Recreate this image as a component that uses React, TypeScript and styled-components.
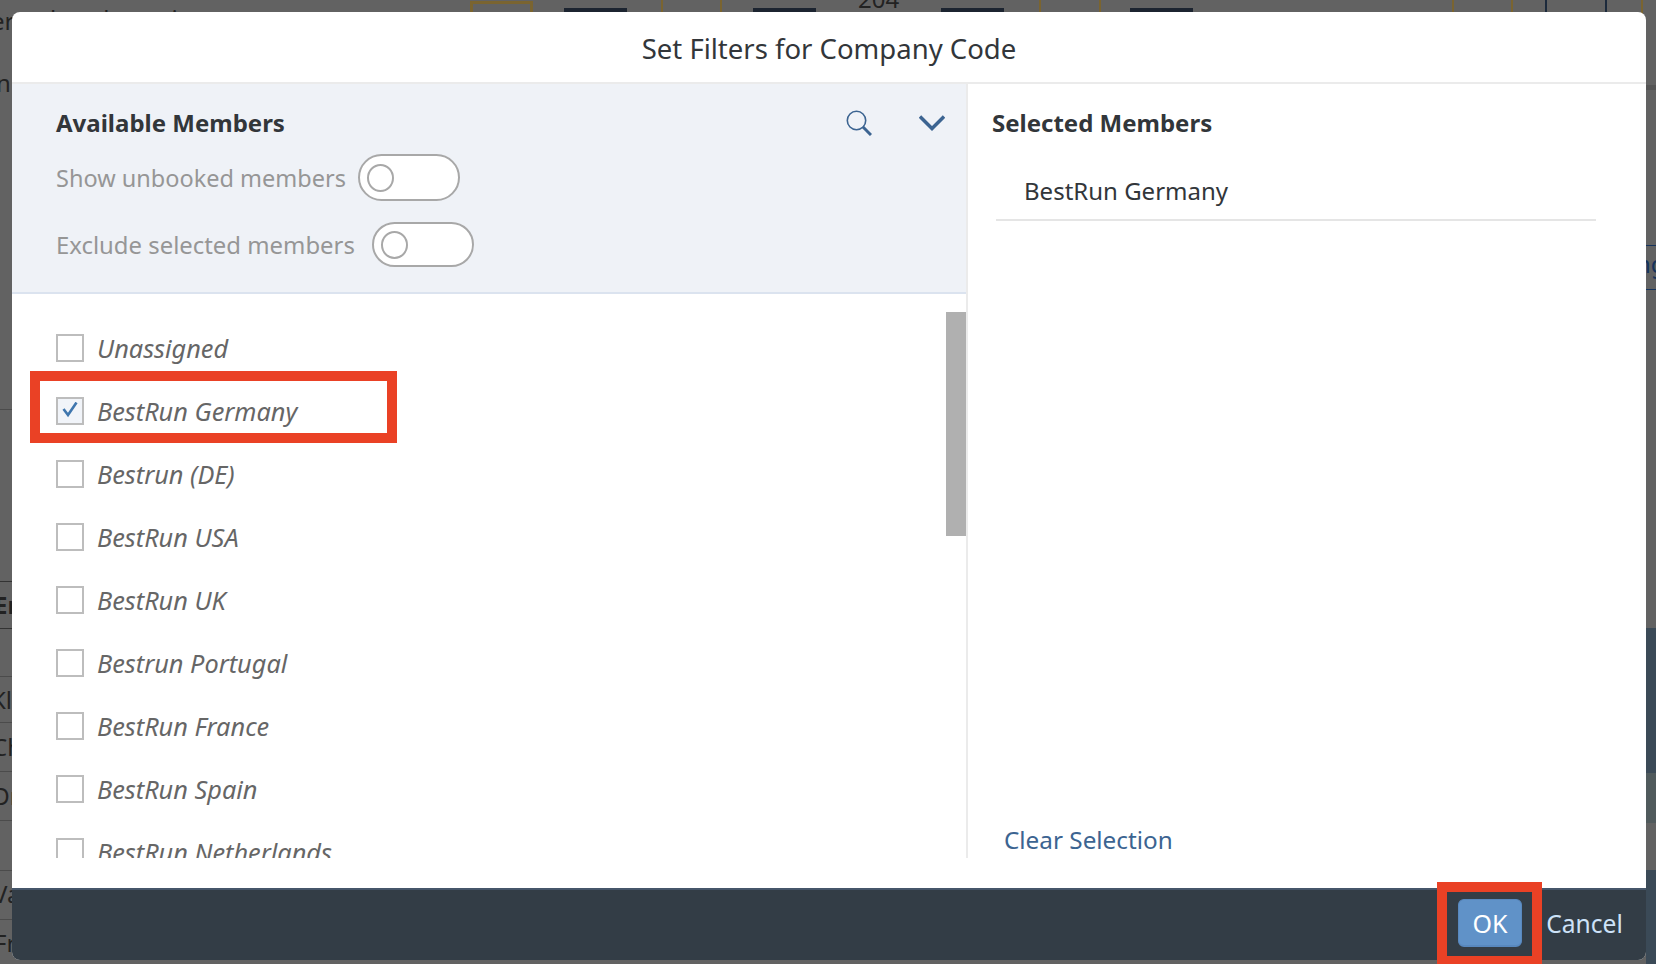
import React from "react";
import styled, { createGlobalStyle } from "styled-components";

const Global = createGlobalStyle`
  html, body { margin: 0; padding: 0; overflow: hidden; }
  * { box-sizing: border-box; }
  body { font-family: "Noto Sans", "Open Sans", sans-serif; }
`;

const Stage = styled.div`
  position: relative;
  width: 1656px;
  height: 964px;
  overflow: hidden;
  background: #626262;
`;

// what is left visible of the page behind the dialog
const Band = styled.div<{ $y: number; $h: number; $c: string }>`
  position: absolute;
  left: 1646px;
  right: 0;
  top: ${(p) => p.$y}px;
  height: ${(p) => p.$h}px;
  background: ${(p) => p.$c};
`;
const GoldBox = styled.div`
  position: absolute;
  left: 470px;
  top: 1px;
  width: 63px;
  height: 20px;
  border: 3px solid #7a6430;
`;
const DarkBar = styled.div<{ $x: number }>`
  position: absolute;
  left: ${(p) => p.$x}px;
  top: 8px;
  width: 63px;
  height: 10px;
  background: #1c2430;
`;
const ThinLine = styled.div<{ $x: number; $dark?: boolean }>`
  position: absolute;
  left: ${(p) => p.$x}px;
  top: 0;
  width: 2px;
  height: 14px;
  background: ${(p) => (p.$dark ? "#1c2a3c" : "#7a6430")};
`;
const RowRule = styled.div<{ $y: number; $dark?: boolean }>`
  position: absolute;
  left: 0;
  width: 14px;
  top: ${(p) => p.$y}px;
  height: 1px;
  background: ${(p) => (p.$dark ? "#333" : "#4b4b4b")};
`;
const Peek = styled.span<{ $x: number; $y: number; $bold?: boolean; $blue?: boolean }>`
  position: absolute;
  left: ${(p) => p.$x}px;
  top: ${(p) => p.$y - 15}px;
  line-height: 30px;
  font-size: 24px;
  white-space: nowrap;
  font-weight: ${(p) => (p.$bold ? 700 : 400)};
  color: ${(p) => (p.$blue ? "#16335c" : "#222")};
`;

const Dialog = styled.div`
  position: absolute;
  left: 12px;
  top: 12px;
  width: 1634px;
  height: 948px;
  display: flex;
  flex-direction: column;
  background: #fff;
  border-radius: 8px;
  overflow: hidden;
`;
const Header = styled.header`
  height: 72px;
  flex: none;
  display: flex;
  align-items: center;
  justify-content: center;
  padding-top: 3px;
  border-bottom: 2px solid #ebebeb;
  font-size: 27.5px;
  color: #32363a;
`;
const Columns = styled.div`
  height: 774px;
  flex: none;
  display: flex;
`;
const LeftColumn = styled.section`
  width: 954px;
  flex: none;
  display: flex;
  flex-direction: column;
`;
const FilterPanel = styled.div`
  height: 210px;
  flex: none;
  padding: 24px 21px 0 44px;
  background: #eff2f7;
  border-bottom: 2px solid #dbe3ef;
`;
const PanelTop = styled.div`
  display: flex;
  align-items: center;
  height: 30px;
`;
const SectionTitle = styled.h2`
  margin: 0;
  font-size: 24px;
  line-height: 30px;
  font-weight: 700;
  color: #32363a;
`;
const SearchButton = styled.span`
  display: flex;
  margin-left: auto;
`;
const ChevronButton = styled.span`
  display: flex;
  margin-left: 47px;
`;
const SwitchRow = styled.label<{ $top: number }>`
  display: flex;
  align-items: center;
  margin-top: ${(p) => p.$top}px;
  color: #969696;
`;
const SwitchLabel = styled.span<{ $w: number; $size: number }>`
  width: ${(p) => p.$w}px;
  font-size: ${(p) => p.$size}px;
  line-height: 30px;
  white-space: nowrap;
`;
const Switch = styled.span<{ $h: number }>`
  display: flex;
  align-items: center;
  width: 102px;
  height: ${(p) => p.$h}px;
  padding-left: 7px;
  background: #fff;
  border: 2px solid #a8a8a8;
  border-radius: 24px;
`;
const Knob = styled.span`
  width: 27px;
  height: 28px;
  border: 2px solid #a8a8a8;
  border-radius: 50%;
`;
const MemberList = styled.div`
  position: relative;
  flex: 1;
  min-height: 0;
  overflow: hidden;
  padding-top: 22px;
`;
const Scrollbar = styled.div`
  position: absolute;
  right: 0;
  top: 18px;
  width: 20px;
  height: 224px;
  background: #b0b0b0;
`;
const MemberRow = styled.div`
  display: flex;
  align-items: center;
  height: 63px;
  padding-left: 44px;
  gap: 13px;
  font-size: 25.3px;
  font-style: italic;
  color: #666;
`;
const Checkbox = styled.span<{ $checked?: boolean }>`
  display: flex;
  align-items: center;
  justify-content: center;
  width: 28px;
  height: 28px;
  flex: none;
  border: 2px solid #bdbdbd;
  background: ${(p) => (p.$checked ? "#f1f4f9" : "#fff")};
`;
const RightColumn = styled.section`
  flex: 1;
  display: flex;
  flex-direction: column;
  border-left: 2px solid #ebebeb;
  padding: 24px 0 3px 24px;
`;
const SelectedItem = styled.div`
  width: 600px;
  height: 59px;
  margin: 24px 0 0 4px;
  padding: 0 0 0 28px;
  display: flex;
  align-items: center;
  font-size: 24px;
  color: #32363a;
  border-bottom: 2px solid #e5e5e5;
`;
const ClearLink = styled.a`
  margin: auto 0 0 12px;
  font-size: 24.3px;
  line-height: 30px;
  color: #3c6491;
`;
const Spacer = styled.div`
  flex: 1;
`;
const Footer = styled.footer`
  height: 72px;
  flex: none;
  display: flex;
  align-items: center;
  justify-content: flex-end;
  gap: 24px;
  padding: 0 23px 4px 0;
  background: #333d46;
  border-top: 2px solid #46566a;
`;
const OkButton = styled.button`
  width: 64px;
  height: 48px;
  padding: 0;
  font: inherit;
  font-size: 25px;
  color: #fff;
  background: #6092c8;
  border: 1px solid #5888be;
  border-bottom-width: 2px;
  border-radius: 6px;
`;
const CancelButton = styled.button`
  width: 77px;
  padding: 0;
  font: inherit;
  font-size: 24.6px;
  white-space: nowrap;
  color: #cde2f8;
  background: none;
  border: none;
`;
const Highlight = styled.div<{ $x: number; $y: number; $w: number; $h: number }>`
  position: absolute;
  left: ${(p) => p.$x}px;
  top: ${(p) => p.$y}px;
  width: ${(p) => p.$w}px;
  height: ${(p) => p.$h}px;
  border: 10px solid #ea4125;
`;

const members = [
  "Unassigned",
  "BestRun Germany",
  "Bestrun (DE)",
  "BestRun USA",
  "BestRun UK",
  "Bestrun Portugal",
  "BestRun France",
  "BestRun Spain",
  "BestRun Netherlands",
];

const peeks = [
  { x: -9, y: 21, t: "er" },
  { x: -4, y: 83, t: "n" },
  { x: -6, y: 605, t: "Er", bold: true },
  { x: -9, y: 700, t: "Kl" },
  { x: -8, y: 747, t: "Ch" },
  { x: -9, y: 796, t: "Or" },
  { x: -7, y: 894, t: "Va" },
  { x: -6, y: 943, t: "Fr" },
];

function SearchIcon() {
  return (
    <svg width="26" height="26" viewBox="0 0 26 26" fill="none" stroke="#3c6491">
      <circle cx="10.5" cy="10.5" r="9.2" strokeWidth="1.6" />
      <path d="M17 17l8 8" strokeWidth="3" />
    </svg>
  );
}

function ChevronIcon() {
  return (
    <svg width="26" height="16" viewBox="0 0 26 16" fill="none" stroke="#3c6491" strokeWidth="3.4">
      <path d="M1 1.5l12 12 12-12" />
    </svg>
  );
}

function CheckMark() {
  return (
    <svg width="18" height="18" viewBox="0 0 18 18" fill="none" stroke="#3f76ae" strokeWidth="2.6">
      <path d="M2.5 7l4.5 6L15.5.5" />
    </svg>
  );
}

export default function App() {
  return (
    <Stage>
      <Global />
      <Band $y={85} $h={5} $c="#555" />
      <Band $y={245} $h={1} $c="#16335c" />
      <Band $y={289} $h={1} $c="#16335c" />
      <Band $y={628} $h={145} $c="#3b4a57" />
      <Band $y={773} $h={50} $c="#505a5c" />
      <Band $y={870} $h={94} $c="#3b4a57" />
      <GoldBox />
      {[564, 753, 941, 1130].map((x) => (
        <DarkBar key={x} $x={x} />
      ))}
      {[661, 720, 1039, 1099, 1452, 1511, 1641].map((x) => (
        <ThinLine key={x} $x={x} />
      ))}
      {[1545, 1605].map((x) => (
        <ThinLine key={x} $x={x} $dark />
      ))}
      {[581, 628].map((y) => (
        <RowRule key={y} $y={y} $dark />
      ))}
      {[409, 676, 722, 771, 820, 870, 919].map((y) => (
        <RowRule key={y} $y={y} />
      ))}
      {peeks.map((p) => (
        <Peek key={p.t} $x={p.x} $y={p.y} $bold={p.bold}>
          {p.t}
        </Peek>
      ))}
      <Peek $x={50} $y={19}>
        but the action to
      </Peek>
      <Peek $x={858} $y={-1}>
        204
      </Peek>
      <Peek $x={1636} $y={264} $blue>
        ng
      </Peek>

      <Dialog>
        <Header>Set Filters for Company Code</Header>
        <Columns>
          <LeftColumn>
            <FilterPanel>
              <PanelTop>
                <SectionTitle>Available Members</SectionTitle>
                <SearchButton>
                  <SearchIcon />
                </SearchButton>
                <ChevronButton>
                  <ChevronIcon />
                </ChevronButton>
              </PanelTop>
              <SwitchRow $top={16}>
                <SwitchLabel $w={302} $size={23.5}>
                  Show unbooked members
                </SwitchLabel>
                <Switch $h={47}>
                  <Knob />
                </Switch>
              </SwitchRow>
              <SwitchRow $top={21}>
                <SwitchLabel $w={316} $size={23.9}>
                  Exclude selected members
                </SwitchLabel>
                <Switch $h={45}>
                  <Knob />
                </Switch>
              </SwitchRow>
            </FilterPanel>
            <MemberList>
              {members.map((m) => (
                <MemberRow key={m}>
                  <Checkbox $checked={m === "BestRun Germany"}>
                    {m === "BestRun Germany" && <CheckMark />}
                  </Checkbox>
                  {m}
                </MemberRow>
              ))}
              <Scrollbar />
            </MemberList>
          </LeftColumn>
          <RightColumn>
            <SectionTitle>Selected Members</SectionTitle>
            <SelectedItem>BestRun Germany</SelectedItem>
            <ClearLink>Clear Selection</ClearLink>
          </RightColumn>
        </Columns>
        <Spacer />
        <Footer>
          <OkButton>OK</OkButton>
          <CancelButton>Cancel</CancelButton>
        </Footer>
      </Dialog>

      <Highlight $x={30} $y={371} $w={367} $h={72} />
      <Highlight $x={1437} $y={882} $w={105} $h={84} />
    </Stage>
  );
}
